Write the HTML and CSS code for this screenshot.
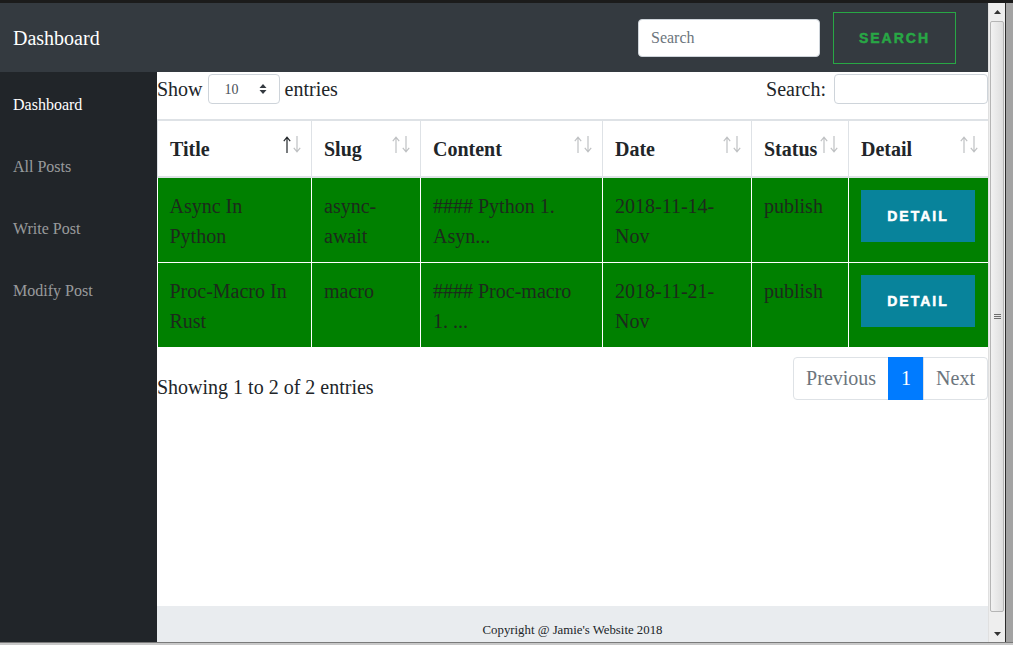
FILE: index.html
```html
<!DOCTYPE html>
<html lang="en">
<head>
<meta charset="utf-8">
<title>Dashboard</title>
<link rel="stylesheet" href="styles.css">
</head>
<body>
<div class="window">
  <div class="frame-top"></div>
  <div class="frame-mid">
    <div class="viewport">
      <nav class="navbar">
        <span class="brand">Dashboard</span>
        <input class="nav-search" type="text" placeholder="Search">
        <button class="btn-search">Search</button>
      </nav>
      <div class="layout">
        <aside class="sidebar">
          <ul class="side-nav">
            <li><a class="active" href="#">Dashboard</a></li>
            <li><a href="#">All Posts</a></li>
            <li><a href="#">Write Post</a></li>
            <li><a href="#">Modify Post</a></li>
          </ul>
        </aside>
        <main class="main">
          <div class="content">
            <div class="controls">
              <div class="length">
                <span>Show</span>
                <div class="select"><span>10</span>
                  <svg class="select-caret" width="8" height="12" viewBox="0 0 8 12"><path d="M4 1 L7.5 5 H0.5 Z M4 11 L7.5 7 H0.5 Z" fill="#343a40"/></svg>
                </div>
                <span>entries</span>
              </div>
              <div class="filter">
                <span>Search:</span>
                <input class="filter-input" type="text">
              </div>
            </div>
            <table class="posts">
              <thead>
                <tr>
                  <th class="c-title"><div class="th-in"><span>Title</span><span class="sort"><svg class="arr on" width="8" height="17" viewBox="0 0 8 17"><path d="M4 1.5 V17 M0.8 5.2 L4 1.2 L7.2 5.2"/></svg><svg class="arr" width="8" height="17" viewBox="0 0 8 17"><path d="M4 0 V15.5 M0.8 11.8 L4 15.8 L7.2 11.8"/></svg></span></div></th>
                  <th class="c-slug"><div class="th-in"><span>Slug</span><span class="sort"><svg class="arr" width="8" height="17" viewBox="0 0 8 17"><path d="M4 1.5 V17 M0.8 5.2 L4 1.2 L7.2 5.2"/></svg><svg class="arr" width="8" height="17" viewBox="0 0 8 17"><path d="M4 0 V15.5 M0.8 11.8 L4 15.8 L7.2 11.8"/></svg></span></div></th>
                  <th class="c-content"><div class="th-in"><span>Content</span><span class="sort"><svg class="arr" width="8" height="17" viewBox="0 0 8 17"><path d="M4 1.5 V17 M0.8 5.2 L4 1.2 L7.2 5.2"/></svg><svg class="arr" width="8" height="17" viewBox="0 0 8 17"><path d="M4 0 V15.5 M0.8 11.8 L4 15.8 L7.2 11.8"/></svg></span></div></th>
                  <th class="c-date"><div class="th-in"><span>Date</span><span class="sort"><svg class="arr" width="8" height="17" viewBox="0 0 8 17"><path d="M4 1.5 V17 M0.8 5.2 L4 1.2 L7.2 5.2"/></svg><svg class="arr" width="8" height="17" viewBox="0 0 8 17"><path d="M4 0 V15.5 M0.8 11.8 L4 15.8 L7.2 11.8"/></svg></span></div></th>
                  <th class="c-status"><div class="th-in"><span>Status</span><span class="sort"><svg class="arr" width="8" height="17" viewBox="0 0 8 17"><path d="M4 1.5 V17 M0.8 5.2 L4 1.2 L7.2 5.2"/></svg><svg class="arr" width="8" height="17" viewBox="0 0 8 17"><path d="M4 0 V15.5 M0.8 11.8 L4 15.8 L7.2 11.8"/></svg></span></div></th>
                  <th class="c-detail"><div class="th-in"><span>Detail</span><span class="sort"><svg class="arr" width="8" height="17" viewBox="0 0 8 17"><path d="M4 1.5 V17 M0.8 5.2 L4 1.2 L7.2 5.2"/></svg><svg class="arr" width="8" height="17" viewBox="0 0 8 17"><path d="M4 0 V15.5 M0.8 11.8 L4 15.8 L7.2 11.8"/></svg></span></div></th>
                </tr>
              </thead>
              <tbody>
                <tr>
                  <td>Async In Python</td>
                  <td>async-await</td>
                  <td class="wrap-tight">#### Python 1. Asyn...</td>
                  <td>2018-11-14-Nov</td>
                  <td>publish</td>
                  <td><button class="btn-detail">Detail</button></td>
                </tr>
                <tr>
                  <td>Proc-Macro In Rust</td>
                  <td>macro</td>
                  <td class="wrap-tight">#### Proc-macro 1. ...</td>
                  <td>2018-11-21-Nov</td>
                  <td>publish</td>
                  <td><button class="btn-detail">Detail</button></td>
                </tr>
              </tbody>
            </table>
            <div class="table-foot">
              <div class="info">Showing 1 to 2 of 2 entries</div>
              <ul class="pagination">
                <li class="page first">Previous</li>
                <li class="page active">1</li>
                <li class="page last">Next</li>
              </ul>
            </div>
          </div>
          <footer class="footer">Copyright @ Jamie's Website 2018</footer>
        </main>
      </div>
    </div>
    <div class="scrollbar">
      <div class="sb-arrow"><svg width="7" height="4" viewBox="0 0 7 4"><path d="M3.5 0 L7 4 H0 Z" fill="#333"/></svg></div>
      <div class="sb-thumb"><span class="grip"></span><span class="grip"></span><span class="grip"></span></div>
      <div class="sb-arrow sb-down"><svg width="7" height="4" viewBox="0 0 7 4"><path d="M0 0 H7 L3.5 4 Z" fill="#333"/></svg></div>
    </div>
    <div class="frame-right"></div>
  </div>
  <div class="frame-bottom"></div>
</div>
</body>
</html>
```

FILE: styles.css
```css
* { box-sizing: border-box; }

body {
  margin: 0;
  font-family: "Liberation Serif", "Times New Roman", serif;
  color: #212529;
}

.window {
  width: 1013px;
  height: 645px;
  display: flex;
  flex-direction: column;
  overflow: hidden;
  background: #9d9d9d;
}

.frame-top { height: 3px; flex: none; background: #1b1b1b; }
.frame-bottom { height: 3px; flex: none; background: #c8c8c8; border-top: 1px solid #7a7a7a; }
.frame-mid { flex: 1; display: flex; min-height: 0; }
.frame-right { width: 8px; flex: none; background: #a3a3a3; border-left: 1px solid #2b2b2b; }

.viewport { flex: 1; display: flex; flex-direction: column; min-width: 0; }

/* navbar */
.navbar {
  height: 69px;
  flex: none;
  background: #343a40;
  display: flex;
  align-items: center;
  padding: 0 32px 0 13px;
}
.brand { color: #fff; font-size: 20px; margin-right: auto; padding-top: 2px; }
.nav-search {
  width: 182px;
  height: 38px;
  border: 1px solid #ced4da;
  border-radius: 4px;
  padding: 6px 12px;
  font-family: "Liberation Serif", serif;
  font-size: 16px;
  color: #495057;
  background: #fff;
}
.nav-search::placeholder { color: #6c757d; }
.btn-search {
  margin-left: 13px;
  width: 123px;
  height: 52px;
  background: transparent;
  border: 1px solid #28a745;
  border-radius: 0;
  color: #28a745;
  font-family: "Liberation Sans", Arial, sans-serif;
  font-weight: 700;
  font-size: 14px;
  letter-spacing: 2px;
  text-transform: uppercase;
  -webkit-text-stroke: 0.5px #28a745;
  padding: 0;
}

/* body layout */
.layout { flex: 1; display: flex; min-height: 0; }

.sidebar { width: 157px; flex: none; background: #212529; }
.side-nav { list-style: none; margin: 0; padding: 2px 0 0; }
.side-nav a {
  display: block;
  padding: 19px 13px;
  font-size: 16px;
  line-height: 24px;
  color: rgba(255, 255, 255, 0.55);
  text-decoration: none;
}
.side-nav a.active { color: #fff; }

.main { flex: 1; display: flex; flex-direction: column; min-width: 0; background: #fff; }
.content { flex: 1; font-size: 20px; line-height: 1.5; }

.controls {
  display: flex;
  justify-content: space-between;
  align-items: center;
  height: 32px;
  padding-top: 2px;
}
.length, .filter { display: flex; align-items: center; gap: 5px; }
.select {
  width: 72px;
  height: 30px;
  border: 1px solid #ced4da;
  border-radius: 4px;
  display: flex;
  align-items: center;
  justify-content: space-between;
  padding: 0 12px 0 16px;
  font-size: 14px;
  color: #495057;
}
.filter { gap: 8px; }
.filter-input {
  width: 154px;
  height: 30px;
  border: 1px solid #ced4da;
  border-radius: 4px;
  background: #fff;
}

/* table */
.posts {
  width: 831px;
  margin-top: 15px;
  border-collapse: collapse;
  table-layout: fixed;
  border-top: 2px solid #dee2e6;
}
.c-title { width: 154px; }
.c-slug { width: 109px; }
.c-content { width: 182px; }
.c-date { width: 149px; }
.c-status { width: 97px; }
.c-detail { width: 140px; }

.posts th {
  text-align: left;
  font-weight: 700;
  padding: 13px 10px 12px 12px;
  border: 1px solid #dee2e6;
  border-bottom: 2px solid #dee2e6;
  background: #fff;
}
.th-in { display: flex; justify-content: space-between; align-items: flex-start; }
.sort { display: flex; gap: 2px; margin-top: 2px; }
.arr { fill: none; stroke: #bfc1c3; stroke-width: 1.2; }
.arr.on { stroke: #212529; }

.posts td {
  background: #008000;
  color: #1c2a1c;
  vertical-align: top;
  padding: 13px 12px 11px 12px;
  border: 1px solid #fff;
}
.posts td:first-child { border-left: none; }
.posts td:last-child { border-right: none; }
.posts td.wrap-tight { padding-right: 16px; }

.btn-detail {
  width: 114px;
  height: 52px;
  margin-top: -1px;
  background: #08839b;
  border: none;
  border-radius: 0;
  color: #fff;
  font-family: "Liberation Sans", Arial, sans-serif;
  font-weight: 700;
  font-size: 14px;
  letter-spacing: 2px;
  text-transform: uppercase;
  -webkit-text-stroke: 0.5px #fff;
  padding: 0;
  display: block;
}

.table-foot {
  display: flex;
  justify-content: space-between;
  align-items: flex-start;
  margin-top: 9px;
}
.info { padding-top: 15px; }
.pagination { display: flex; list-style: none; margin: 0; padding: 0; line-height: 1.25; }
.page {
  padding: 8px 12px;
  border: 1px solid #dee2e6;
  margin-left: -1px;
  color: #6c757d;
  background: #fff;
}
.page.first { border-radius: 4px 0 0 4px; margin-left: 0; }
.page.last { border-radius: 0 4px 4px 0; }
.page.active { background: #007bff; border-color: #007bff; color: #fff; }

.footer {
  height: 36px;
  flex: none;
  background: #e9ecef;
  text-align: center;
  font-size: 12.8px;
  line-height: 1.5;
  padding-top: 15px;
}

/* scrollbar */
.scrollbar {
  width: 17px;
  flex: none;
  background: #eeeeee;
  border-left: 1px solid #e0e0e0;
  display: flex;
  flex-direction: column;
}
.sb-arrow {
  height: 18px;
  flex: none;
  display: flex;
  align-items: center;
  justify-content: center;
}
.sb-down { height: 17px; margin-top: 13px; }
.sb-thumb {
  flex: 1;
  margin: 0 1px;
  border: 1px solid #b5b5b5;
  border-radius: 2px;
  background: linear-gradient(to right, #f2f2f2, #dedede);
  display: flex;
  flex-direction: column;
  align-items: center;
  justify-content: center;
  gap: 1px;
}
.grip { width: 7px; height: 1px; background: #6e6e6e; }
```
